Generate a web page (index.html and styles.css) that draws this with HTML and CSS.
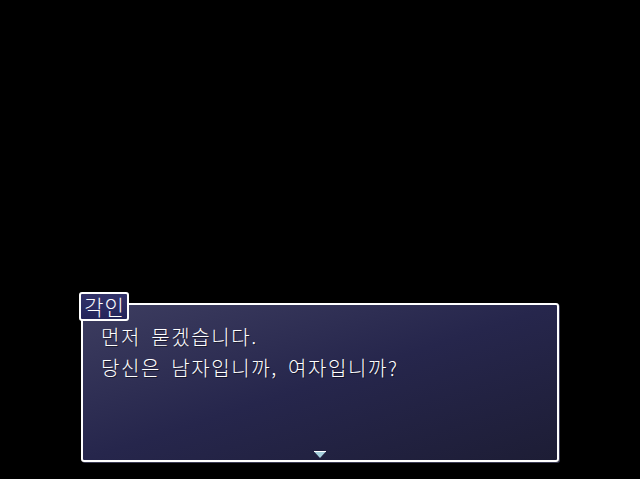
FILE: index.html
```html
<!DOCTYPE html>
<html lang="ko">
<head>
<meta charset="utf-8">
<link rel="stylesheet" href="styles.css">
</head>
<body>
<div class="stage">
  <div class="window">
    <div class="name">각인</div>
    <p class="line">먼저 묻겠습니다.</p>
    <p class="line">당신은 남자입니까, 여자입니까?</p>
    <svg class="pause" width="14" height="8" viewBox="0 0 14 8">
      <polygon points="1,0.5 13,0.5 7,7" fill="#a6cfdc"/>
      <line x1="1" y1="0.5" x2="13" y2="0.5" stroke="#ffffff" stroke-width="1"/>
    </svg>
  </div>
</div>
</body>
</html>
```
FILE: styles.css
```css
html, body {
  margin: 0;
  padding: 0;
  background: #000;
}
body {
  width: 640px;
  height: 479px;
  overflow: hidden;
  font-family: "Noto Sans CJK KR", "Noto Sans", sans-serif;
  color: #fff;
}
.stage {
  padding-top: 303px;
  padding-left: 81px;
}
.window {
  position: relative;
  box-sizing: border-box;
  width: 478px;
  height: 159px;
  border: 2px solid #fff;
  border-radius: 3px;
  background: linear-gradient(to bottom right, #3d3d60 0%, #26264c 50%, #1d1d35 100%);
  padding: 16px 18px 0;
  box-shadow: 1px 1px 0 rgba(120, 120, 170, 0.5);
}
.line {
  margin: 0;
  font-size: 20px;
  font-weight: 300;
  line-height: 31px;
  letter-spacing: 1.6px;
  word-spacing: 3px;
  white-space: nowrap;
  text-shadow: 1px 1px 0 rgba(0, 0, 0, 0.45);
}
.name {
  position: absolute;
  left: -4px;
  top: -13px;
  box-sizing: border-box;
  width: 50px;
  height: 29px;
  border: 2px solid #fff;
  border-radius: 3px;
  background: linear-gradient(to bottom, #33336a, #24245a);
  font-size: 21px;
  font-weight: 300;
  line-height: 25px;
  letter-spacing: 1px;
  text-align: center;
  text-indent: 1px;
}
.pause {
  position: absolute;
  left: 230px;
  top: 146px;
  display: block;
}
```
